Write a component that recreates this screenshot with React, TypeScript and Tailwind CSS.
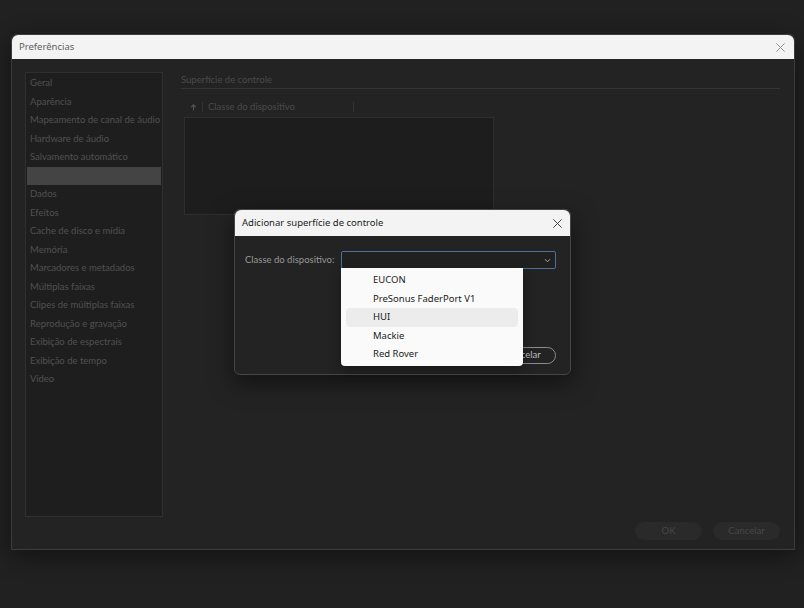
import React from 'react';

const navItems = [
  'Geral',
  'Aparência',
  'Mapeamento de canal de áudio',
  'Hardware de áudio',
  'Salvamento automático',
  '',
  'Dados',
  'Efeitos',
  'Cache de disco e mídia',
  'Memória',
  'Marcadores e metadados',
  'Múltiplas faixas',
  'Clipes de múltiplas faixas',
  'Reprodução e gravação',
  'Exibição de espectrais',
  'Exibição de tempo',
  'Vídeo',
];

const deviceOptions = ['EUCON', 'PreSonus FaderPort V1', 'HUI', 'Mackie', 'Red Rover'];

function CloseIcon({ className }: { className?: string }) {
  return (
    <svg viewBox="0 0 12 12" className={className} fill="none" stroke="currentColor" strokeWidth="1">
      <path d="M1.5 1.5 L10.5 10.5 M10.5 1.5 L1.5 10.5" />
    </svg>
  );
}

const adobe = { fontFamily: 'Lato, "Noto Sans", sans-serif' };

export default function App() {
  return (
    <div
      className="relative w-[804px] h-[608px] bg-[#212121] overflow-hidden"
      style={{ fontFamily: '"Noto Sans", "Open Sans", sans-serif' }}
    >
      {/* Preferences window */}
      <div className="absolute left-[11px] top-[34px] w-[784px] h-[516px] flex flex-col rounded-t-[6px] border border-[#3c3c3c] bg-[#232323] shadow-[0_6px_24px_rgba(0,0,0,0.45)]">
        <div className="h-[25px] flex items-center justify-between pl-[7px] pr-[8px] bg-[#f3f3f3] rounded-t-[6px]">
          <span className="text-[9.5px] text-[#5f5f5f]">Preferências</span>
          <CloseIcon className="w-[11px] h-[11px] text-[#8a8a8a]" />
        </div>

        <div className="flex-1 flex pl-[13px] pt-[13px] pr-[14px] pb-[32px] gap-[18px] relative" style={adobe}>
          {/* nav list */}
          <div className="w-[138px] h-[445px] bg-[#1e1e1e] border border-[#2f2f2f] pt-[1px] px-[1px]">
            {navItems.map((item, i) => (
              <div
                key={i}
                className={`h-[18.5px] flex items-center pl-[3px] text-[9.5px] whitespace-nowrap text-[#515151] ${
                  i === 5 ? 'bg-[#444444]' : ''
                }`}
              >
                {item}
              </div>
            ))}
          </div>

          {/* right panel */}
          <div className="flex-1 flex flex-col">
            <div className="text-[9.5px] text-[#4a4a4a] leading-[14px] pt-[1px]">Superfície de controle</div>
            <div className="h-px bg-[#343434] mt-[1px]" />
            <div className="flex items-center h-[16px] mt-[10px] ml-[8px] text-[9.5px] text-[#4a4a4a]">
              <svg viewBox="0 0 8 8" className="w-[7px] h-[7px] ml-[1px] mr-[5px]" fill="none" stroke="#555" strokeWidth="1.3">
                <path d="M4 7.5 V1.5 M1.5 3.5 L4 1 L6.5 3.5" />
              </svg>
              <div className="w-px h-[10px] bg-[#333]" />
              <span className="ml-[5px] w-[145px]">Classe do dispositivo</span>
              <div className="w-px h-[10px] bg-[#333]" />
            </div>
            <div className="ml-[3px] mt-[2px] w-[310px] h-[98px] bg-[#1d1d1d] border border-[#2e2e2e]" />
          </div>

          <div className="absolute right-[14px] bottom-[9px] flex gap-[11px]">
            <button className="w-[67px] h-[18px] rounded-full bg-[#2a2a2a] text-[9.5px] text-[#474747]">OK</button>
            <button className="w-[67px] h-[18px] rounded-full bg-[#2a2a2a] text-[9.5px] text-[#474747]">Cancelar</button>
          </div>
        </div>
      </div>

      {/* Add control surface dialog */}
      <div className="absolute left-[234px] top-[209px] w-[337px] h-[166px] flex flex-col rounded-[6px] border border-[#464646] bg-[#232323] shadow-[0_8px_24px_rgba(0,0,0,0.5)]">
        <div className="h-[26px] flex items-center justify-between pl-[7px] pr-[7px] bg-[#f3f3f3] rounded-t-[6px]">
          <span className="text-[9.5px] text-[#1b1b1b]">Adicionar superfície de controle</span>
          <CloseIcon className="w-[11px] h-[11px] text-[#333]" />
        </div>
        <div className="flex-1 flex flex-col pl-[10px] pr-[14px] pt-[15px]" style={adobe}>
          <div className="flex items-center">
            <span className="w-[96px] text-[9.5px] text-[#999999]">Classe do dispositivo:</span>
            <div className="flex-1 h-[18px] border border-[#4d6f9a] rounded-[2px] flex items-center justify-end pr-[4px] bg-[#202020]">
              <svg viewBox="0 0 8 6" className="w-[7px] h-[5px]" fill="none" stroke="#aaa" strokeWidth="1.2">
                <path d="M1 1.5 L4 4.5 L7 1.5" />
              </svg>
            </div>
          </div>
          <div className="flex justify-end gap-[8px] mt-[78px]">
            <button className="w-[67px] h-[17px] rounded-full border border-[#8a8a8a] text-[9.5px] text-[#bdbdbd]">OK</button>
            <button className="w-[67px] h-[17px] rounded-full border border-[#8a8a8a] text-[9.5px] text-[#bdbdbd]">Cancelar</button>
          </div>
        </div>
      </div>

      {/* open dropdown */}
      <div className="absolute left-[341px] top-[268px] w-[182px] h-[98px] bg-[#fafafa] rounded-b-[4px] shadow-[0_4px_12px_rgba(0,0,0,0.35)] py-[3px] px-[5px]">
        {deviceOptions.map((opt) => (
          <div
            key={opt}
            className={`h-[18.5px] flex items-center pl-[27px] text-[9.5px] text-[#1a1a1a] rounded-[4px] ${
              opt === 'HUI' ? 'bg-[#ececec]' : ''
            }`}
          >
            {opt}
          </div>
        ))}
      </div>
    </div>
  );
}
